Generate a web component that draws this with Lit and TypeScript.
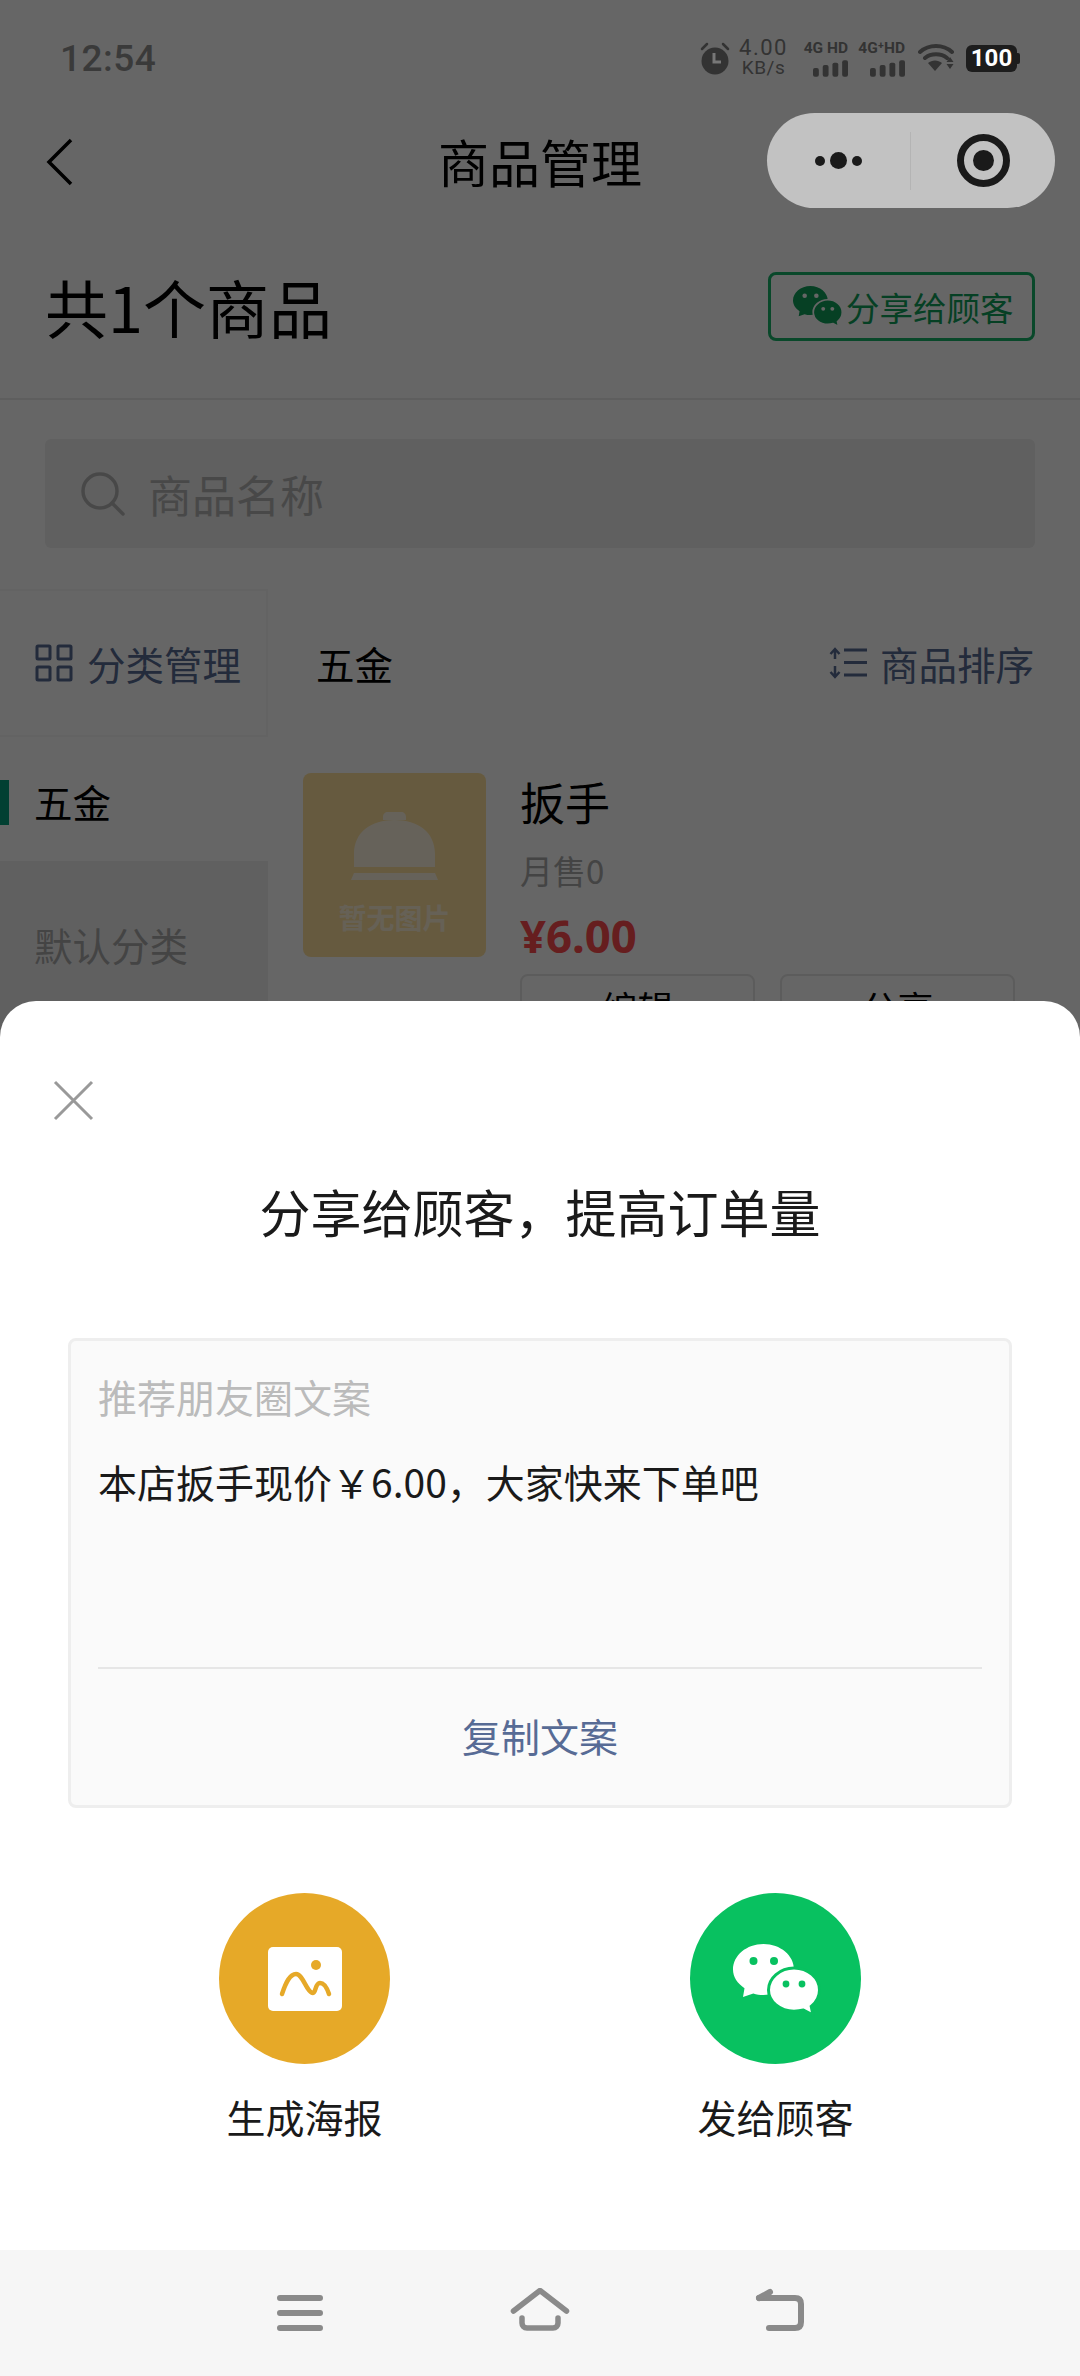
import { LitElement, html, css } from "lit";
import { customElement } from "lit/decorators.js";

const wechat = (bg: string) => html`<svg class="wx" viewBox="0 0 86 70">
  <path d="M30.500 0C47.500 0 61 11.500 61 25.500S47.500 51 30.500 51c-3.600 0-7-.5-10.200-1.500L10 53l1.500-8.800C4.500 39.500 0 33 0 25.500 0 11.500 13.500 0 30.500 0Z" fill="currentColor"/>
  <circle cx="20.500" cy="17" r="4" fill="${bg}"/><circle cx="41" cy="17" r="4" fill="${bg}"/>
  <path d="M61 24c14 0 25.500 9.700 25.500 22 0 6.500-3.200 12.300-8.300 16.400L80 71l-9.500-5c-3 .8-6.200 1.200-9.500 1.200-14 0-25.500-9.500-25.500-21.200S47 24 61 24Z" fill="currentColor" stroke="${bg}" stroke-width="3"/>
  <circle cx="53" cy="40" r="3.400" fill="${bg}"/><circle cx="69" cy="40" r="3.400" fill="${bg}"/>
</svg>`;

const bars = html`<svg class="bars" viewBox="0 0 36 17"><rect x="0" y="8" width="6" height="9" rx="2" fill="#333"/><rect x="10" y="5" width="6" height="12" rx="2" fill="#333"/><rect x="20" y="2.500" width="6" height="14.500" rx="2" fill="#333"/><rect x="30" y="0" width="6" height="17" rx="2" fill="#333"/></svg>`;

@customElement("app-root")
export class AppRoot extends LitElement {
  static styles = css`
    :host { display: block; position: relative; width: 1080px; height: 2376px; overflow: hidden; background: #fff;
      font-family: "Noto Sans CJK SC", "Noto Sans", sans-serif; color: #1a1a1a; }
    * { box-sizing: border-box; }
    .wx { overflow: visible; }
    .status { position: relative; z-index: 3; height: 80px; padding: 36px 60px 0 60px; display: flex; align-items: center; justify-content: space-between; color: #333; }
    .time { font: 500 37px Roboto, sans-serif; letter-spacing: .5px; color: #3a3a3a; }
    .sicons { display: flex; align-items: center; color: #333; height: 40px; }
    .alarm { width: 30px; height: 34px; margin-right: 8px; }
    .speed { display: flex; flex-direction: column; align-items: center; width: 51px; margin-right: 11px; color: #333; font-family: Roboto, sans-serif; }
    .speed span { font-size: 22px; line-height: 20px; letter-spacing: 1.500px; white-space: nowrap; }
    .speed span + span { font-size: 19px; letter-spacing: .5px; }
    .sim { display: flex; flex-direction: column; align-items: flex-end; width: 48px; margin-right: 9px; }
    .sim .lb { font: 700 15.500px/16px Roboto, sans-serif; color: #333; white-space: nowrap; }
    .bars { width: 35px; height: 17px; margin-top: 4px; display: block; }
    .wifi { width: 38px; height: 30px; margin: 0 10px 0 4px; }
    .batt { display: flex; align-items: center; }
    .battb { width: 51px; height: 27px; border-radius: 6px; background: #1d1d1d; color: #fff; font: 700 24px/27px Roboto, sans-serif; text-align: center; }
    .battn { width: 3px; height: 11px; background: #1d1d1d; border-radius: 0 2px 2px 0; }

    .nav { height: 164px; display: flex; align-items: center; justify-content: center; position: relative; padding-bottom: 2px; }
    .back { position: absolute; left: 45px; top: 58px; width: 30px; height: 48px; }
    .ntitle { font-size: 51px; line-height: 60px; color: #000; }
    .capsule { position: absolute; z-index: 3; left: 767px; top: 33px; width: 288px; height: 95px; border-radius: 48px; background: rgba(255,255,255,.6); display: flex; align-items: center; }
    .cleft { width: 144px; height: 58px; display: flex; align-items: center; justify-content: center; gap: 5px; border-right: 1px solid #b4b4b4; }
    .dot { width: 10px; height: 10px; border-radius: 50%; background: #1a1a1a; }
    .dot.big { width: 17px; height: 17px; }
    .cright { flex: 1; display: flex; justify-content: center; }
    .ring { width: 53px; height: 53px; border-radius: 50%; border: 7px solid #1a1a1a; display: flex; align-items: center; justify-content: center; }
    .ring i { width: 21px; height: 21px; border-radius: 50%; background: #1a1a1a; }

    .head { height: 156px; padding: 0 45px 30px 45px; display: flex; align-items: center; justify-content: space-between; border-bottom: 2px solid #eaeaea; }
    .count { font-size: 63px; line-height: 74px; color: #000; }
    .sharebtn { width: 267px; height: 69px; border: 3px solid #18b46a; border-radius: 8px; display: flex; align-items: center; padding-left: 22px; color: #10a15b; font-size: 33.500px; gap: 4px; }
    .sharebtn .wx { width: 49px; height: 40px; }

    .search { margin: 39px 45px 0; height: 109px; background: #f0f0f0; border-radius: 6px; display: flex; align-items: center; padding-left: 35px; color: #b5b5b5; font-size: 44px; gap: 22px; }
    .search svg { width: 46px; height: 46px; }

    .main { margin-top: 41px; display: flex; }
    .side { width: 268px; flex: none; }
    .sh { height: 148px; border: solid #f8f8f8; border-width: 2px 2px 2px 0; display: flex; align-items: center; padding-left: 35px; font-size: 38.500px; color: #576b95; gap: 14px; }
    .sh svg { width: 38px; height: 38px; }
    .si { height: 124px; position: relative; display: flex; align-items: center; padding: 4px 0 0 34px; font-size: 38.500px; color: #000; }
    .si i { position: absolute; left: 0; top: 43px; width: 9px; height: 45px; background: #07a17e; }
    .si.off { height: 174px; background: #f1f1f1; color: #aaa; padding-top: 0; padding-bottom: 8px; }

    .col { flex: 1; }
    .ch { height: 148px; display: flex; align-items: center; justify-content: space-between; padding: 0 46px 0 48px; font-size: 38.500px; color: #576b95; }
    .ch b { font-weight: 400; color: #000; font-size: 38.500px; }
    .sort { display: flex; align-items: center; gap: 13px; }
    .sort svg { width: 38px; height: 32px; }
    .prod { margin: 36px 0 0 35px; display: flex; gap: 34px; }
    .pic { width: 183px; height: 184px; border-radius: 8px; background: #ffe19e; display: flex; flex-direction: column; align-items: center; padding-top: 39px; }
    .pic svg { width: 87px; height: 68px; }
    .pic span { font-size: 28px; line-height: 34px; font-weight: 700; margin-top: 20px; color: rgba(255,255,255,.6); white-space: nowrap; }
    .info { display: flex; flex-direction: column; }
    .name { font-size: 45px; line-height: 52px; margin-top: 3px; color: #000; }
    .sold { font-size: 33px; line-height: 40px; color: #aaa; margin-top: 22px; }
    .price { font: 700 45.500px/54px "Noto Sans", sans-serif; color: #ff4d4f; margin-top: 18px; }
    .btns { display: flex; gap: 25px; margin-top: 12px; }
    .btns span { width: 235px; height: 70px; border: 2px solid #e6e6e6; border-radius: 8px; text-align: center; font-size: 36px; line-height: 62px; color: #000; }

    .overlay { position: absolute; inset: 0; background: rgba(0,0,0,.6); z-index: 2; }
    .sheet { position: absolute; z-index: 4; left: 0; right: 0; top: 1001px; bottom: 0; background: #fff; border-radius: 36px 36px 0 0; display: flex; flex-direction: column; }
    .x { position: absolute; left: 53px; top: 79px; width: 41px; height: 41px; }
    .stitle { margin-top: 178px; text-align: center; font-size: 51px; line-height: 64px; color: #1a1a1a; }
    .card { margin: 95px 68px 0; height: 470px; border: 3px solid #eeeeee; border-radius: 8px; background: #fafafa; padding: 29px 27px 0; display: flex; flex-direction: column; }
    .ct { font-size: 39px; line-height: 52px; color: #bbb; }
    .cb { font-size: 39px; line-height: 52px; color: #1a1a1a; margin-top: 33px; white-space: nowrap; }
    .cd { margin-top: 160px; border-top: 2px solid #e6e6e6; }
    .cc { text-align: center; font-size: 39px; line-height: 52px; color: #576b95; margin-top: 40px; }
    .acts { display: flex; margin: 85px 0 0 219px; gap: 300px; }
    .act { width: 171px; display: flex; flex-direction: column; align-items: center; font-size: 39px; line-height: 52px; color: #1a1a1a; white-space: nowrap; }
    .circle { width: 171px; height: 171px; border-radius: 50%; display: flex; align-items: center; justify-content: center; margin-bottom: 26px; }
    .gold { background: #e6a928; }
    .green { background: #08c160; color: #fff; }
    .green .wx { width: 86px; height: 70px; }
    .gold svg { width: 74px; height: 64px; }
    .bar { margin-top: auto; height: 126px; background: #f6f6f6; display: flex; align-items: center; justify-content: center; gap: 180px; }
    .bar svg { width: 60px; height: 50px; }
  `;

  render() {
    return html`
      <div class="status">
        <span class="time">12:54</span>
        <div class="sicons">
          <svg class="alarm" viewBox="0 0 30 34"><path d="M2 8 7 3M28 8l-5-5" stroke="#333" stroke-width="2.500" stroke-linecap="round"/><circle cx="15" cy="20" r="13.500" fill="#333"/><path d="M14 12v9h7" stroke="#777" stroke-width="3" fill="none"/></svg>
          <div class="speed"><span>4.00</span><span>KB/s</span></div>
          <div class="sim"><span class="lb">4G HD</span>${bars}</div>
          <div class="sim"><span class="lb">4G⁺HD</span>${bars}</div>
          <svg class="wifi" viewBox="0 0 38 30"><path d="M2 9C11 1 25 1 34 9M7 15c6-5 16-5 22 0" stroke="#333" stroke-width="4" fill="none" stroke-linecap="round"/><path d="M10 20c4-3.500 10-3.500 14 0l-7 8Z" fill="#333"/><path d="m32 14 3.500 5h-7Zm0 12-3.500-5h7Z" fill="#333"/></svg>
          <div class="batt"><div class="battb">100</div><div class="battn"></div></div>
        </div>
      </div>
      <div class="nav">
        <svg class="back" viewBox="0 0 30 48"><path d="M26 2 4 24l22 22" stroke="#000" stroke-width="3.500" fill="none"/></svg>
        <span class="ntitle">商品管理</span>
        <div class="capsule">
          <div class="cleft"><span class="dot"></span><span class="dot big"></span><span class="dot"></span></div>
          <div class="cright"><div class="ring"><i></i></div></div>
        </div>
      </div>
      <div class="head">
        <span class="count">共1个商品</span>
        <div class="sharebtn">${wechat("#fff")}<span>分享给顾客</span></div>
      </div>
      <div class="search">
        <svg viewBox="0 0 46 46"><circle cx="20" cy="20" r="17" stroke="#b5b5b5" stroke-width="3.500" fill="none"/><path d="m32 32 11 11" stroke="#b5b5b5" stroke-width="3.500" stroke-linecap="round"/></svg>
        <span>商品名称</span>
      </div>
      <div class="main">
        <div class="side">
          <div class="sh">
            <svg viewBox="0 0 38 38"><g fill="none" stroke="#576b95" stroke-width="3"><rect x="2" y="2" width="13" height="13" rx="1"/><rect x="23" y="2" width="13" height="13" rx="1"/><rect x="2" y="23" width="13" height="13" rx="1"/><rect x="23" y="23" width="13" height="13" rx="1"/></g></svg>
            <span>分类管理</span>
          </div>
          <div class="si"><i></i>五金</div>
          <div class="si off">默认分类</div>
        </div>
        <div class="col">
          <div class="ch">
            <b>五金</b>
            <div class="sort">
              <svg viewBox="0 0 38 32"><path d="M6 2v10M1.500 7 6 2l4.500 5M6 19v11M1.500 25 6 30l4.500-5" fill="none" stroke="#576b95" stroke-width="2.500"/><path d="M15 3h23M15 15.500h23M15 28h23" stroke="#576b95" stroke-width="3"/></svg>
              <span>商品排序</span>
            </div>
          </div>
          <div class="prod">
            <div class="pic">
              <svg viewBox="0 0 87 68"><path d="M32 8V5c0-3 2-5 5-5h13c3 0 5 2 5 5v3ZM3 55V42C3 20 20 8 43.500 8S84 20 84 42v13ZM3 61h81l3 7H0Z" fill="rgba(255,255,255,.7)"/></svg>
              <span>暂无图片</span>
            </div>
            <div class="info">
              <span class="name">扳手</span>
              <span class="sold">月售0</span>
              <span class="price">¥6.00</span>
              <div class="btns"><span>编辑</span><span>分享</span></div>
            </div>
          </div>
        </div>
      </div>
      <div class="overlay"></div>
      <div class="sheet">
        <svg class="x" viewBox="0 0 41 41"><path d="m2 2 37 37M39 2 2 39" stroke="#999" stroke-width="3"/></svg>
        <div class="stitle">分享给顾客，提高订单量</div>
        <div class="card">
          <div class="ct">推荐朋友圈文案</div>
          <div class="cb">本店扳手现价￥6.00，大家快来下单吧</div>
          <div class="cd"></div>
          <div class="cc">复制文案</div>
        </div>
        <div class="acts">
          <div class="act"><div class="circle gold">
            <svg viewBox="0 0 74 64"><rect width="74" height="64" rx="5" fill="#fff"/><circle cx="48" cy="18" r="5" fill="#e6a928"/><path d="M14 47c4-12 8-20 14-20 7 0 11 19 17 19 3 0 2-10 7-10 4 0 7 5 9 11" fill="none" stroke="#e6a928" stroke-width="4.500" stroke-linecap="round"/></svg>
          </div>生成海报</div>
          <div class="act"><div class="circle green">${wechat("#08c160")}</div>发给顾客</div>
        </div>
        <div class="bar">
          <svg viewBox="0 0 60 50"><path d="M10 10h40M10 25h40M10 40h40" stroke="#8a8a8a" stroke-width="6" stroke-linecap="round"/></svg>
          <svg viewBox="0 0 60 50"><path d="M3.500 23 30 2.500 56.500 23" stroke="#8a8a8a" stroke-width="5.500" fill="none" stroke-linecap="round" stroke-linejoin="round"/><path d="M12 30v5c0 3 2 5 5 5h26c3 0 5-2 5-5v-5" stroke="#8a8a8a" stroke-width="5.500" fill="none" stroke-linecap="round"/></svg>
          <svg viewBox="0 0 60 50"><path d="M9 10h36c4 0 6 2 6 6v18c0 4-2 6-6 6H19" stroke="#8a8a8a" stroke-width="6" fill="none" stroke-linecap="round"/><path d="M9 10l11-6" stroke="#8a8a8a" stroke-width="6" stroke-linecap="round"/></svg>
        </div>
      </div>
    `;
  }
}
